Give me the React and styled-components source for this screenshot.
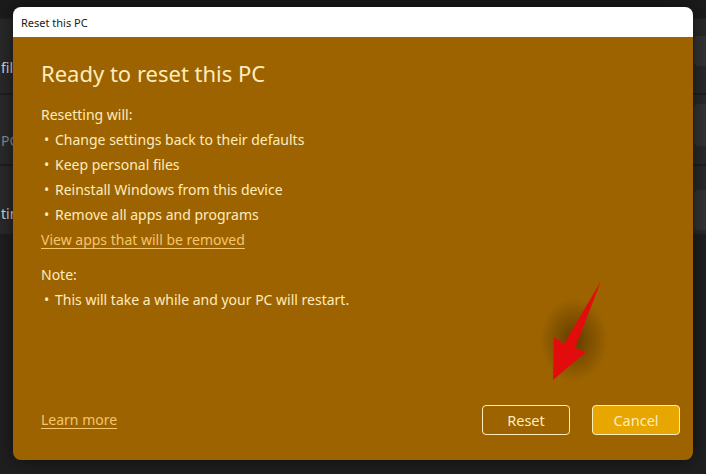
import React from "react";
import styled, { createGlobalStyle } from "styled-components";

const Global = createGlobalStyle`
  html, body { margin: 0; padding: 0; background: #202020; overflow: hidden; }
  body { font-family: "Noto Sans", "Open Sans", sans-serif; }
`;

const Screen = styled.div`
  position: relative;
  width: 706px;
  height: 474px;
  overflow: hidden;
  background: #1f1f1f;
`;

const Backdrop = styled.div`
  display: flex;
  flex-direction: column;
  gap: 2px;
  margin-right: -40px;
`;

const TopStrip = styled.div`
  height: 17px;
  background: #1b1b1b;
`;

const SettingRow = styled.div`
  height: ${(p) => p.$h}px;
  background: ${(p) => p.$bg || "#2a2a2a"};
  display: flex;
  align-items: center;
  justify-content: space-between;
  padding-left: 1px;
  color: ${(p) => (p.$dim ? "#8a8a8a" : "#d8d8d8")};
  font-size: 14px;
`;

const RowLabel = styled.span`
  padding-top: ${(p) => p.$off || 0}px;
`;

const RowButton = styled.div`
  width: 52px;
  height: ${(p) => p.$h}px;
  background: #343434;
  border-radius: 4px;
  margin-top: ${(p) => p.$off || 0}px;
`;

const Dialog = styled.div`
  position: absolute;
  left: 13px;
  top: 7px;
  width: 680px;
  height: 453px;
  border-radius: 8px;
  overflow: hidden;
  display: flex;
  flex-direction: column;
  box-shadow: 0 0 18px rgba(0, 0, 0, 0.55);
`;

const TitleBar = styled.div`
  height: 30px;
  background: #ffffff;
  display: flex;
  align-items: center;
  padding-left: 8px;
  font-size: 11px;
  color: #1a1a1a;
`;

const Body = styled.div`
  flex: 1;
  background: #9d6300;
  display: flex;
  flex-direction: column;
  padding: 20px 13px 25px 28px;
  color: #fdecbc;
`;

const Heading = styled.h1`
  margin: 0;
  font-size: 22px;
  line-height: 32px;
  font-weight: 400;
`;

const Para = styled.div`
  font-size: 14px;
  line-height: 25px;
  margin-top: ${(p) => p.$mt || 0}px;
`;

const Bullet = styled.div`
  display: flex;
  font-size: 14px;
  line-height: 25px;
  &::before {
    content: "•";
    width: 14px;
    padding-left: 3px;
    box-sizing: border-box;
  }
`;

const Link = styled.a`
  font-size: 14px;
  line-height: 26px;
  padding-top: ${(p) => p.$pt || 0}px;
  color: #f6c56c;
  text-decoration: underline;
  text-underline-offset: 3px;
  text-decoration-thickness: 1px;
  align-self: flex-start;
  cursor: pointer;
`;

const Footer = styled.div`
  margin-top: auto;
  display: flex;
  align-items: center;
  gap: 22px;
`;

const Spacer = styled.div`
  flex: 1;
`;

const Button = styled.button`
  width: 88px;
  height: 30px;
  border-radius: 4px;
  border: 1.5px solid #fdecbc;
  background: ${(p) => (p.$primary ? "#e8a600" : "transparent")};
  color: #fdecbc;
  font-family: "Noto Sans", "Open Sans", sans-serif;
  font-size: 14.5px;
  padding: 0;
`;

const Arrow = styled.svg`
  position: absolute;
  left: 0;
  top: 0;
  pointer-events: none;
`;

export default function App() {
  return (
    <>
      <Global />
      <Screen>
        <Backdrop>
          <TopStrip />
          <SettingRow $h={74} $bg="#292929">
            <RowLabel $off={22}>file</RowLabel>
            <RowButton $h={30} $off={-10} />
          </SettingRow>
          <SettingRow $h={69} $dim>
            <RowLabel $off={22}>PC</RowLabel>
            <RowButton $h={42} $off={-10} />
          </SettingRow>
          <SettingRow $h={68}>
            <RowLabel $off={26}>ting</RowLabel>
            <RowButton $h={40} $off={20} />
          </SettingRow>
        </Backdrop>

        <Dialog>
          <TitleBar>Reset this PC</TitleBar>
          <Body>
            <Heading>Ready to reset this PC</Heading>
            <Para $mt={13}>Resetting will:</Para>
            <Bullet>Change settings back to their defaults</Bullet>
            <Bullet>Keep personal files</Bullet>
            <Bullet>Reinstall Windows from this device</Bullet>
            <Bullet>Remove all apps and programs</Bullet>
            <Link>View apps that will be removed</Link>
            <Para $mt={9}>Note:</Para>
            <Bullet>This will take a while and your PC will restart.</Bullet>
            <Footer>
              <Link $pt={2}>Learn more</Link>
              <Spacer />
              <Button>Reset</Button>
              <Button $primary>Cancel</Button>
            </Footer>
          </Body>
        </Dialog>

        <Arrow width="706" height="474" viewBox="0 0 706 474">
          <defs>
            <radialGradient id="sh" cx="0.5" cy="0.5" r="0.5">
              <stop offset="0" stopColor="#000" stopOpacity="0.38" />
              <stop offset="1" stopColor="#000" stopOpacity="0" />
            </radialGradient>
          </defs>
          <ellipse cx="574" cy="340" rx="34" ry="42" fill="url(#sh)" />
          <polygon
            points="601,281 575,348 586,352 553,380 554,337 564,344"
            fill="#e30c0c"
          />
        </Arrow>
      </Screen>
    </>
  );
}
